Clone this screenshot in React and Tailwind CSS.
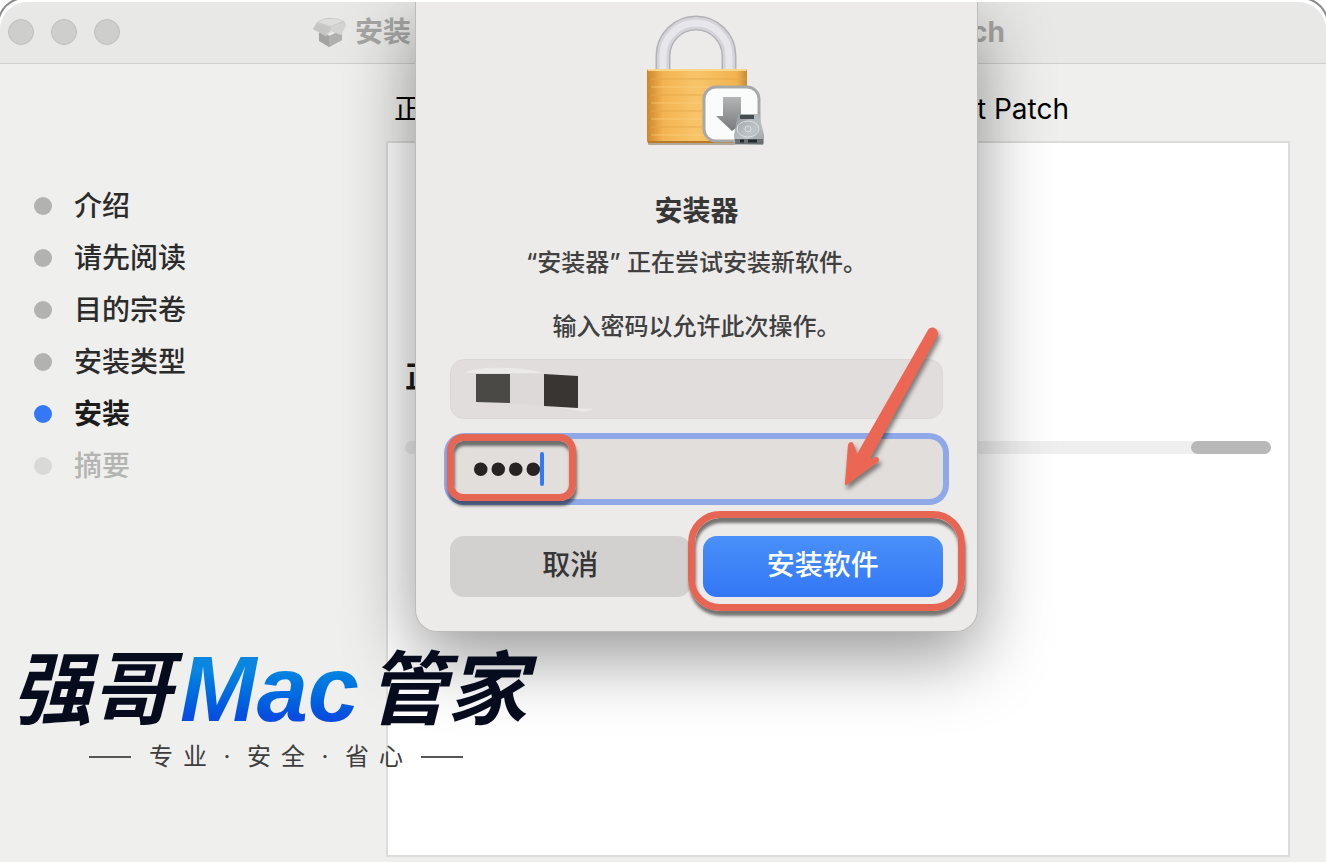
import { useState } from 'react';

const FONT = "font-['Inter','Noto_Sans_CJK_SC',sans-serif]";

const STEPS = [
    { label: '介绍', state: 'done' },
    { label: '请先阅读', state: 'done' },
    { label: '目的宗卷', state: 'done' },
    { label: '安装类型', state: 'done' },
    { label: '安装', state: 'current' },
    { label: '摘要', state: 'pending' },
];

const DOT_STYLES = {
    done: 'bg-[#b2b2b1]',
    current: 'bg-[#3478f6]',
    pending: 'bg-[#d9d9d8]',
};

const LABEL_STYLES = {
    done: 'font-medium text-[#2b2b2b]',
    current: 'font-bold text-[#1c1c1c]',
    pending: 'font-medium text-[#b4b4b3]',
};

function PackageIcon() {
    return (
        <svg width="34" height="32" viewBox="0 0 34 32" aria-hidden="true">
            <path d="M6 15 L17 20 L29 14 L29 24 L16 31 L6 25 Z" fill="#a3a3a2" />
            <path d="M16 20 L29 14 L29 24 L16 31 Z" fill="#b0b0af" />
            <path d="M4 6 Q16 -2 31 5 L33 9 L28 19 L18 15 L13 20 L0 13 Z" fill="#cbcbca" />
            <path d="M5 6 Q16 0 30 5 L18 10 Z" fill="#dededd" />
            <path d="M3 8 L18 11 L13 20 L0 13 Z" fill="#c6c6c5" />
            <path d="M18 11 L31 6 L33 9 L28 19 L18 15 Z" fill="#d4d4d3" />
        </svg>
    );
}

function LockIcon() {
    return (
        <svg width="140" height="134" viewBox="-16 0 140 134" aria-hidden="true">
            <defs>
                <linearGradient id="brass" x1="0" x2="1" y1="0" y2="0">
                    <stop offset="0" stopColor="#cf852f" />
                    <stop offset="0.07" stopColor="#e09a3d" />
                    <stop offset="0.16" stopColor="#f3b452" />
                    <stop offset="0.5" stopColor="#f8c469" />
                    <stop offset="0.9" stopColor="#f1b34f" />
                    <stop offset="1" stopColor="#c98a38" />
                </linearGradient>
                <linearGradient id="arrowFill" x1="0" x2="0" y1="0" y2="1">
                    <stop offset="0" stopColor="#b4b5b7" />
                    <stop offset="1" stopColor="#77797c" />
                </linearGradient>
                <linearGradient id="disk" x1="0" x2="1" y1="0" y2="1">
                    <stop offset="0" stopColor="#8f9a9e" />
                    <stop offset="0.6" stopColor="#b9c1c4" />
                    <stop offset="1" stopColor="#8b9497" />
                </linearGradient>
            </defs>
            <path d="M20 60 V43 A33 33 0 0 1 86 43 V60" fill="none" stroke="#b3b3b9" strokeWidth="15" />
            <path d="M20 60 V43 A33 33 0 0 1 86 43 V60" fill="none" stroke="#d3d3d8" strokeWidth="12" />
            <path d="M20 60 V43 A33 33 0 0 1 86 43 V60" fill="none" stroke="#e6e6eb" strokeWidth="7" />
            <rect x="5" y="128" width="98" height="4" rx="1" fill="#8d7a5e" opacity="0.6" />
            <rect x="4" y="56" width="100" height="74" rx="2" fill="url(#brass)" />
            <path d="M5 57 H103" stroke="#fbd78d" strokeWidth="2" />
            <path d="M8 66 H102 M8 82 H102 M8 98 H102 M8 114 H102" stroke="#e3a64b" strokeWidth="1" opacity="0.8" />
            <path d="M8 74 H102 M8 90 H102 M8 106 H102 M8 122 H102" stroke="#fbd485" strokeWidth="1" opacity="0.6" />
            <path d="M5 129 H103" stroke="#b97b2b" strokeWidth="2" />
            <rect x="61" y="74" width="55" height="54" rx="12" fill="#fafbfb" stroke="#a7a9a9" strokeWidth="3" />
            <path d="M80 84 H98 V103 H109 L89 118 L73 103 H80 Z" fill="url(#arrowFill)" />
            <path d="M95 101 H116 L121 122 V130 Q121 132 118 132 H94 Q91 132 91 130 V122 Z" fill="url(#disk)" opacity="0.92" />
            <path d="M97 102 H111 V106 H97 Z" fill="#454d50" />
            <ellipse cx="105" cy="116" rx="11" ry="8" fill="none" stroke="#dbe0e2" strokeWidth="1" />
            <circle cx="105" cy="116" r="3" fill="none" stroke="#dbe0e2" strokeWidth="1" />
            <path d="M92 126 H120 V131 H92 Z" fill="#697174" />
            <path d="M97 128 H101 M105 128 H114" stroke="#24292b" strokeWidth="3" />
        </svg>
    );
}

function PointerArrow() {
    return (
        <svg
            className="pointer-events-none absolute -top-9 right-0 z-10 drop-shadow-[2px_4px_2px_rgba(0,0,0,0.45)]"
            width="110"
            height="170"
            viewBox="0 0 110 170"
            aria-hidden="true"
        >
            <path
                d="M95 7 C98 2 106 5 105 12 L37 136 L43 134 C46 134 47 137 45 139 L15 161 Q11 164 12 159 L15 122 C16 118 20 118 21 122 L24 131 Z"
                fill="#eb6653"
            />
        </svg>
    );
}

function RedactedName() {
    return (
        <svg className="pointer-events-none absolute top-2 left-3" width="150" height="48" viewBox="0 0 150 48" aria-hidden="true">
            <path d="M14 7 H82 V38 L14 35 Z" fill="#dcd9d8" />
            <path d="M2 6 C12 -1 62 -1 80 6 Z" fill="#ebeae8" />
            <path d="M14 7 H48 V36 L14 35 Z" fill="#4a4946" />
            <path d="M82 7 L116 9 V41 L82 39 Z" fill="#383533" />
            <path d="M100 41 L132 42 L122 45 Z" fill="#ebeae8" />
        </svg>
    );
}

function Watermark() {
    return (
        <div className="pointer-events-none absolute top-[641px] left-3">
            <div className="flex items-center text-[80px] leading-[96px] font-bold text-[#060b1e] italic">
                <span>强哥</span>
                <span className="bg-linear-to-b from-[#0a86e0] from-30% to-[#0a4be0] to-80% bg-clip-text px-2 font-['Liberation_Sans',sans-serif] text-[92px] text-transparent">
                    Mac
                </span>
                <span>管家</span>
            </div>
            <div className="mt-1 ml-[77px] flex items-center gap-[10px] text-2xl text-[#3d3d3d]">
                <span className="mr-2 h-[2px] w-[42px] bg-[#555]" />
                {[...'专业·安全·省心'].map((char, i) => (
                    <span key={i} className={char === '·' ? 'w-5 text-center' : ''}>{char}</span>
                ))}
                <span className="ml-2 h-[2px] w-[42px] bg-[#555]" />
            </div>
        </div>
    );
}

function AuthDialog() {
    const [name, setName] = useState('');
    const [password, setPassword] = useState('0000');

    return (
        <div className="absolute inset-x-0 top-0 flex justify-center pl-[67px]">
            <form
                role="dialog"
                aria-labelledby="auth-title"
                onSubmit={(e) => e.preventDefault()}
                className="flex w-[563px] flex-col items-center rounded-b-[22px] border border-t-0 border-[#bdbcba] bg-[#ecebe9] px-[34px] pt-[11px] pb-[34px] shadow-[0_24px_72px_rgba(0,0,0,0.42)]"
            >
                <LockIcon />
                <h1 id="auth-title" className="mt-11 text-[28px] leading-10 font-bold text-[#363636]">安装器</h1>
                <p className="mt-4 text-2xl leading-8 font-medium text-[#404040]">“安装器” 正在尝试安装新软件。</p>
                <p className="mt-8 text-2xl leading-8 font-medium text-[#404040]">输入密码以允许此次操作。</p>

                <div className="relative mt-4 w-full">
                    <input
                        type="text"
                        aria-label="用户名"
                        value={name}
                        onChange={(e) => setName(e.target.value)}
                        className="block h-[60px] w-full rounded-[14px] border border-[#dad7d6] bg-[#e1dddc] px-6 text-2xl outline-none"
                    />
                    <RedactedName />
                    <PointerArrow />
                </div>

                <div className="relative mt-5 w-full">
                    <input
                        type="password"
                        aria-label="密码"
                        value={password}
                        onChange={(e) => setPassword(e.target.value)}
                        className="block h-[60px] w-full rounded-[14px] bg-[#e1dedb] px-[22px] font-['Liberation_Sans',sans-serif] text-[50px] text-[#262322] ring-6 ring-[#8ea8e8] outline-none"
                    />
                    <span className="absolute top-[13px] left-[90px] h-[34px] w-1 rounded-full bg-[#3478f6]" />
                    <span className="pointer-events-none absolute -top-[5px] -left-[3px] h-[67px] w-[129px] rounded-[16px] border-7 border-[#e66553] shadow-[1px_5px_3px_rgba(0,0,0,0.5),inset_1px_5px_3px_rgba(0,0,0,0.5)]" />
                </div>

                <div className="mt-[37px] flex w-full gap-3">
                    <button type="button" className="h-[61px] flex-1 rounded-[14px] bg-[#d3d1cf] pb-1 text-[28px] font-medium text-[#363636]">
                        取消
                    </button>
                    <div className="relative flex-1">
                        <button
                            type="submit"
                            className="h-[61px] w-full rounded-[14px] bg-linear-to-b from-[#4a90f9] to-[#3376f5] pb-1 text-[28px] font-medium text-white"
                        >
                            安装软件
                        </button>
                        <span className="pointer-events-none absolute -top-[25px] -right-[22px] -bottom-[14px] -left-[15px] rounded-[32px] border-7 border-[#e66553] shadow-[1px_5px_3px_rgba(0,0,0,0.5),inset_1px_5px_3px_rgba(0,0,0,0.5)]" />
                    </div>
                </div>
            </form>
        </div>
    );
}

export default function App() {
    return (
        <div className={`relative flex min-h-screen flex-col overflow-hidden bg-white pt-[2px] ${FONT}`}>
            {/* Thin frame that shows at the two top corners */}
            <div className="pointer-events-none absolute -inset-x-[3px] -top-[3px] bottom-0 rounded-t-[28px] border-2 border-b-0 border-[#8a8a8a]" />

            <div className="relative flex flex-1 flex-col overflow-hidden rounded-t-[28px] bg-[#efefed]">
                <header className="relative flex h-[62px] items-center justify-center border-b border-[#cfcfcd] bg-[#e8e8e6] pr-2 pb-0.5">
                    <div className="absolute left-2 flex gap-[17px]">
                        {['关闭', '最小化', '缩放'].map((label) => (
                            <button key={label} type="button" aria-label={label} className="size-[26px] rounded-full border border-[#bfbfbd] bg-[#cececc]" />
                        ))}
                    </div>
                    <div className="flex w-[692px] items-center text-[28px] leading-10 font-bold text-[#a5a5a4]">
                        <PackageIcon />
                        <span className="ml-2">安装</span>
                        <span className="ml-auto">Patch</span>
                    </div>
                </header>

                <div className="flex flex-1">
                    <nav className="w-[386px] shrink-0 pt-[116px] pl-[34px]">
                        <ol>
                            {STEPS.map((step) => (
                                <li key={step.label} className="flex h-[52px] items-center gap-[22px]">
                                    <span className={`size-[18px] rounded-full ${DOT_STYLES[step.state]}`} />
                                    <span className={`text-[28px] leading-10 ${LABEL_STYLES[step.state]}`}>{step.label}</span>
                                </li>
                            ))}
                        </ol>
                    </nav>

                    <main className="flex flex-1 flex-col pr-9 pb-[5px]">
                        <h2 className="flex h-[77px] w-[683px] items-center justify-between pt-3 pl-2 text-[28px] text-black">
                            <span>正在</span>
                            <span>t Patch</span>
                        </h2>
                        <section className="flex-1 border-2 border-[#dcdcda] bg-white px-[17px] pt-[213px]">
                            <p className="text-[30px] leading-10 font-bold text-[#1c1c1c]">正在</p>
                            <div className="mt-[45px] flex h-[13px] justify-end rounded-full bg-[#efefef]">
                                <div className="w-20 rounded-full bg-[#b8b8b8]" />
                            </div>
                        </section>
                    </main>
                </div>

                <AuthDialog />
            </div>

            <Watermark />
        </div>
    );
}
